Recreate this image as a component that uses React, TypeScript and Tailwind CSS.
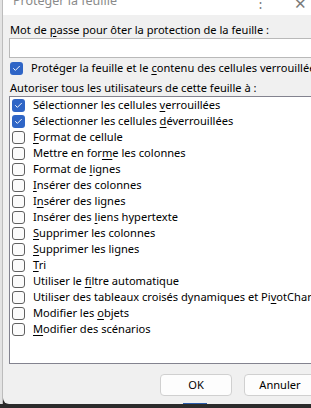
import { Check } from "lucide-react";

type Item = { before: string; key: string; after: string; checked?: boolean };

const items: Item[] = [
  { before: "Sélectionner les cellules ", key: "v", after: "errouillées", checked: true },
  { before: "Sélectionner les cellules ", key: "d", after: "éverrouillées", checked: true },
  { before: "", key: "F", after: "ormat de cellule" },
  { before: "Mettre en for", key: "m", after: "e les colonnes" },
  { before: "Format de ", key: "l", after: "ignes" },
  { before: "", key: "I", after: "nsérer des colonnes" },
  { before: "I", key: "n", after: "sérer des lignes" },
  { before: "Insérer des ", key: "l", after: "iens hypertexte" },
  { before: "", key: "S", after: "upprimer les colonnes" },
  { before: "", key: "S", after: "upprimer les lignes" },
  { before: "", key: "T", after: "ri" },
  { before: "Utiliser le ", key: "f", after: "iltre automatique" },
  { before: "Utiliser des tableaux croisés dynamiques et Pi", key: "v", after: "otChart" },
  { before: "Modifier les ", key: "o", after: "bjets" },
  { before: "", key: "M", after: "odifier des scénarios" },
];

function Box({ checked }: { checked?: boolean }) {
  if (checked) {
    return (
      <span className="w-[13px] h-[13px] shrink-0 rounded-[3px] bg-[#2f65c6] flex items-center justify-center">
        <Check size={9} strokeWidth={2.5} className="text-white" />
      </span>
    );
  }
  return <span className="w-[13px] h-[13px] shrink-0 rounded-[3px] border border-[#606060] bg-[#fbfbfb]" />;
}

function Label({ before, k, after }: { before: string; k: string; after: string }) {
  return (
    <span className="whitespace-nowrap">
      {before}
      <span className="underline underline-offset-2">{k}</span>
      {after}
    </span>
  );
}

export default function App() {
  return (
    <div
      className="w-[311px] h-[408px] overflow-hidden flex bg-[#2b2b2b] text-[11.1px] text-black"
      style={{ fontFamily: '"Noto Sans", "Open Sans", sans-serif' }}
    >
      <div className="w-[3px] h-[404px] bg-[#e3e3e3] border-r border-[#bcbcbc] shrink-0" />
      <div className="flex-1 h-[404px] flex flex-col bg-[#f0f0f0] rounded-bl-[6px] overflow-hidden">
        <div className="h-[15px] bg-white shrink-0 relative overflow-hidden">
          <span className="absolute left-[10px] top-[-8px] text-[#8a8a8a] text-[12.5px] whitespace-nowrap">Protéger la feuille</span>
          <span className="absolute left-[251px] top-[-7px] text-[#7a7a7a] text-[13px]">⋮</span>
          <span className="absolute left-[291px] top-[-8px] text-[#7a7a7a] text-[15px]">✕</span>
        </div>
        <div className="pl-[6px] pt-[6px] flex flex-col">
          <div className="h-[17px] leading-[17px] pl-[1px]">
            Mot de <span className="underline underline-offset-2">p</span>asse pour ôter la protection de la feuille :
          </div>
          <div className="h-[20px] bg-white border border-[#b9b9b9] border-r-0" />
          <div className="mt-[3px] h-[15px] flex items-center gap-[8px] pl-[1px]">
            <Box checked />
            <Label before="Protéger la feuille et le " k="c" after="ontenu des cellules verrouillées" />
          </div>
          <div className="mt-[3px] h-[17px] leading-[17px] pl-[1px]">Autoriser tous les utilisateurs de cette feuille à :</div>
          <div className="h-[268px] bg-white border border-[#83838f] border-r-0 pl-[2px]">
            {items.map((it, i) => (
              <div key={i} className="h-[16px] flex items-center gap-[8px]">
                <Box checked={it.checked} />
                <Label before={it.before} k={it.key} after={it.after} />
              </div>
            ))}
          </div>
          <div className="mt-[10px] flex gap-[12px] pl-[151px]">
            <div className="w-[72px] h-[22px] bg-[#fdfdfd] border border-[#d0d0d0] rounded-[4px] flex items-center justify-center shrink-0">OK</div>
            <div className="w-[72px] h-[22px] bg-[#fdfdfd] border border-[#d0d0d0] rounded-[4px] flex items-center justify-center shrink-0">Annuler</div>
          </div>
          <div className="mt-[7px] ml-[174px] w-[24px] h-[2px] bg-[#2a5caa]" />
        </div>
      </div>
    </div>
  );
}
